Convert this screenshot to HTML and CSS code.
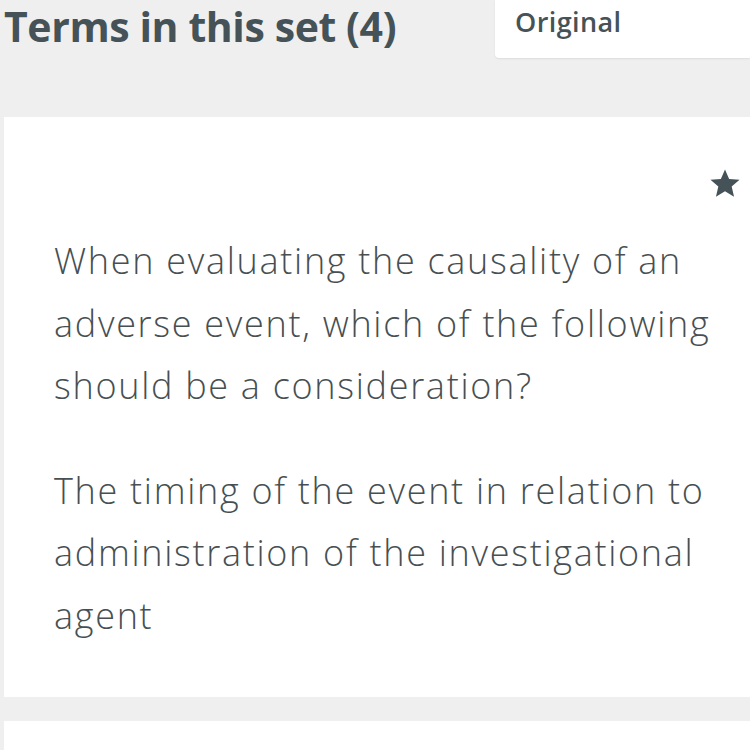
FILE: index.html
```html
<!DOCTYPE html>
<html>
<head>
<meta charset="utf-8">
<link rel="stylesheet" href="styles.css">
</head>
<body>
<div class="page">
  <div class="header">
    <h1 class="title">Terms in this set (4)</h1>
    <div class="select">Original</div>
  </div>
  <div class="card">
    <div class="card-top">
      <svg class="star" viewBox="0 0 24 24" width="32" height="32"><path d="M12 1.8l3.1 7.2 7.8.6-5.9 5.1 1.8 7.6L12 18.2l-6.8 4.1 1.8-7.6L1.1 9.6l7.8-.6z" fill="#455358"/></svg>
    </div>
    <p class="term">When evaluating the causality of an adverse event, which of the following should be a consideration?</p>
    <p class="def">The timing of the event in relation to administration of the investigational agent</p>
  </div>
  <div class="card next"></div>
</div>
</body>
</html>
```
FILE: styles.css
```css
html, body { margin: 0; padding: 0; }
body {
  background: #efefef;
  font-family: "Open Sans", Lato, sans-serif;
  color: #455358;
  width: 750px;
  height: 750px;
  overflow: hidden;
  font-variant-ligatures: none;
}
.page { padding-left: 4px; }
.header {
  display: flex;
  justify-content: space-between;
  align-items: flex-start;
  height: 117px;
}
.title {
  margin: 0;
  flex: none;
  font-size: 41px;
  font-weight: 700;
  line-height: 52px;
  letter-spacing: -0.4px;
  color: #455358;
  white-space: nowrap;
}
.select {
  width: 235px;
  height: 58px;
  background: #fff;
  border-radius: 0 0 0 4px;
  box-shadow: 0 1px 2px rgba(0,0,0,0.08);
  padding-left: 20px;
  font-size: 27px;
  font-weight: 600;
  letter-spacing: 0.4px;
  line-height: 44px;
  color: #455358;
}
.card {
  background: #fff;
  height: 580px;
  padding: 50px 24px 0 50px;
  box-sizing: border-box;
  margin-bottom: 24px;
}
.card-top {
  display: flex;
  justify-content: flex-end;
  margin-right: -15px;
  height: 40px;
}
.term, .def {
  margin: 0;
  font-size: 36px;
  line-height: 62.5px;
  font-weight: 300;
  letter-spacing: 1.7px;
  color: #474f52;
}
.term { margin-top: 23px; }
.def { margin-top: 42px; }
```
